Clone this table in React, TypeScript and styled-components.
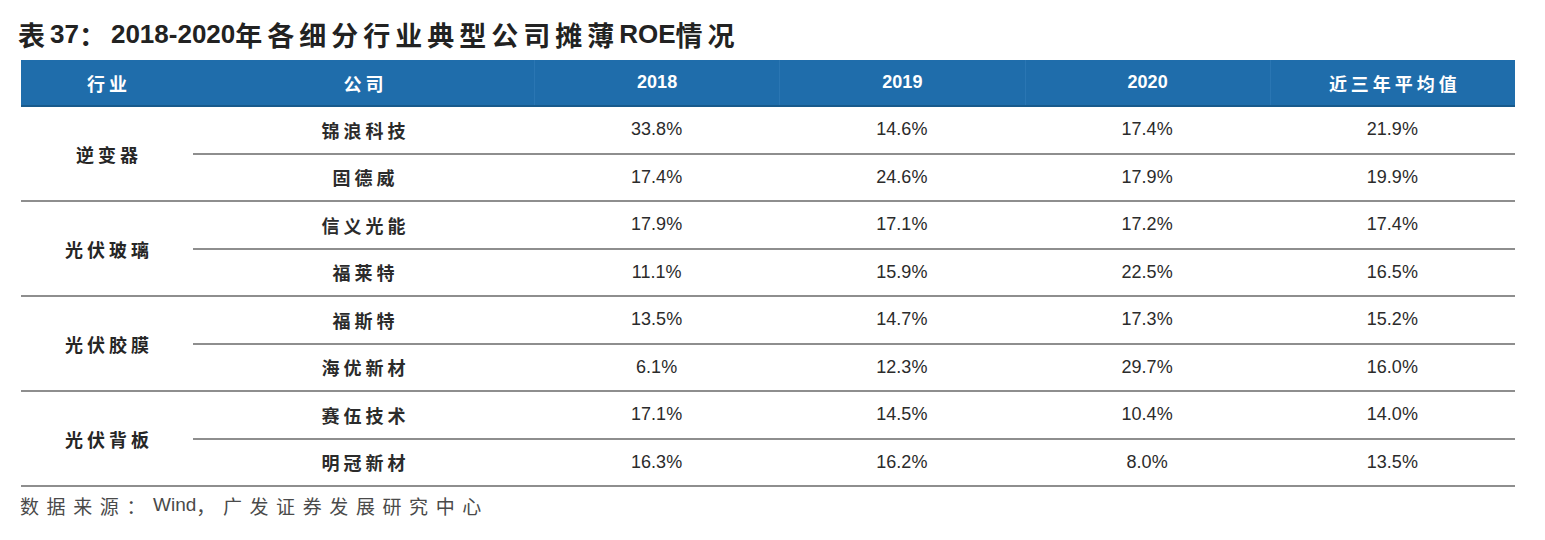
import React from "react";
import styled, { createGlobalStyle } from "styled-components";

type Company = {
  name: string;
  values: string[];
};

type Group = {
  industry: string;
  companies: Company[];
};

const YEARS = ["2018", "2019", "2020"];

const GROUPS: Group[] = [
  {
    industry: "逆变器",
    companies: [
      { name: "锦浪科技", values: ["33.8%", "14.6%", "17.4%", "21.9%"] },
      { name: "固德威", values: ["17.4%", "24.6%", "17.9%", "19.9%"] },
    ],
  },
  {
    industry: "光伏玻璃",
    companies: [
      { name: "信义光能", values: ["17.9%", "17.1%", "17.2%", "17.4%"] },
      { name: "福莱特", values: ["11.1%", "15.9%", "22.5%", "16.5%"] },
    ],
  },
  {
    industry: "光伏胶膜",
    companies: [
      { name: "福斯特", values: ["13.5%", "14.7%", "17.3%", "15.2%"] },
      { name: "海优新材", values: ["6.1%", "12.3%", "29.7%", "16.0%"] },
    ],
  },
  {
    industry: "光伏背板",
    companies: [
      { name: "赛伍技术", values: ["17.1%", "14.5%", "10.4%", "14.0%"] },
      { name: "明冠新材", values: ["16.3%", "16.2%", "8.0%", "13.5%"] },
    ],
  },
];

const GlobalStyle = createGlobalStyle`
  body {
    margin: 0;
    background: #fff;
    font-family: "Liberation Sans", Arial, "Noto Sans CJK SC", sans-serif;
  }
`;

const App = (): JSX.Element => (
  <>
    <GlobalStyle />
    <Page>
      <Title>
        <Cjk>表</Cjk>37<Cjk>：</Cjk>2018-2020
        <Cjk>年各细分行业典型公司摊薄</Cjk>ROE<Cjk>情况</Cjk>
      </Title>
      <Table>
        <HeaderRow>
          <IndustryHead>
            <CellCjk>行业</CellCjk>
          </IndustryHead>
          <CompanyHead>
            <CellCjk>公司</CellCjk>
          </CompanyHead>
          {YEARS.map((y) => (
            <ValueHead key={y}>{y}</ValueHead>
          ))}
          <ValueHead>
            <CellCjk>近三年平均值</CellCjk>
          </ValueHead>
        </HeaderRow>
        {GROUPS.map((group) => (
          <GroupBlock key={group.industry}>
            <IndustryCell>
              <CellCjk>{group.industry}</CellCjk>
            </IndustryCell>
            <Rows>
              {group.companies.map((c, i) => (
                <Row key={c.name} $divided={i > 0}>
                  <CompanyCell>
                    <CellCjk>{c.name}</CellCjk>
                  </CompanyCell>
                  {c.values.map((v, j) => (
                    <ValueCell key={j}>{v}</ValueCell>
                  ))}
                </Row>
              ))}
            </Rows>
          </GroupBlock>
        ))}
      </Table>
      <Source>
        <SourceCjk>数据来源：</SourceCjk>Wind
        <SourceCjk>，广发证券发展研究中心</SourceCjk>
      </Source>
    </Page>
  </>
);

/** Styles */
const Page = styled.div`
  width: 1545px;
  height: 540px;
  padding-top: 14px;
  box-sizing: border-box;
  overflow: hidden;
`;

const Title = styled.h1`
  display: flex;
  align-items: center;
  height: 40px;
  margin: 0 0 6px;
  padding-left: 18px;

  font-size: 26px;
  font-weight: 700;
  color: #222;
  white-space: nowrap;
`;

const Cjk = styled.span`
  font-family: "Noto Sans CJK SC", sans-serif;
  font-size: 27px;
  font-weight: 700;
  letter-spacing: 5px;
`;

const Table = styled.div`
  width: 1494px;
  margin-left: 21px;
`;

const HeaderRow = styled.div`
  display: flex;
  height: 47px;
  background: #1f6dab;
  border-bottom: 2px solid #185a8c;
  box-sizing: border-box;
  color: #fff;
  font-size: 18px;
  font-weight: 700;
`;

const HeadCell = styled.div`
  display: flex;
  align-items: center;
  justify-content: center;
`;

const IndustryHead = styled(HeadCell)`
  width: 172px;
`;

const CompanyHead = styled(HeadCell)`
  width: 341px;
`;

const ValueHead = styled(HeadCell)`
  flex: 1;
  border-left: 1px solid #2a76b3;
`;

const CellCjk = styled.span`
  font-family: "Noto Sans CJK SC", sans-serif;
  font-weight: 700;
  font-size: 18px;
  letter-spacing: 4px;
  padding-left: 4px;
`;

const GroupBlock = styled.div`
  display: flex;
  height: 95px;
  border-bottom: 2px solid #8e8e8e;
  box-sizing: border-box;
`;

const IndustryCell = styled.div`
  display: flex;
  align-items: center;
  justify-content: center;
  width: 172px;
  color: #262626;
`;

const Rows = styled.div`
  display: flex;
  flex-direction: column;
  flex: 1;
`;

const Row = styled.div<{ $divided: boolean }>`
  display: flex;
  flex: 1;
  border-top: ${({ $divided }) => ($divided ? "2px solid #8e8e8e" : "none")};
  color: #2b2b2b;
  font-size: 18px;
`;

const CompanyCell = styled.div`
  display: flex;
  align-items: center;
  justify-content: center;
  width: 341px;
`;

const ValueCell = styled.div`
  display: flex;
  align-items: center;
  justify-content: center;
  flex: 1;
`;

const Source = styled.div`
  display: flex;
  align-items: center;
  height: 40px;
  padding-left: 20px;
  margin-top: -2px;

  font-size: 19px;
  color: #4a4a4a;
  white-space: nowrap;
`;

const SourceCjk = styled.span`
  font-family: "Noto Sans CJK SC", sans-serif;
  font-size: 19px;
  letter-spacing: 7.6px;
`;

export default App;
